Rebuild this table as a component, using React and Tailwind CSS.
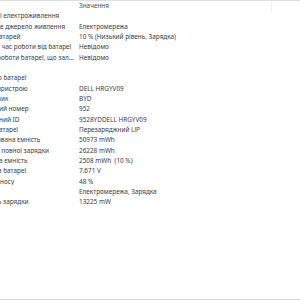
const rows = [
  { label: 'і електроживлення', shift: 'ml-0', value: '' },
  { label: 'е джерело живлення', shift: 'ml-0', value: 'Електромережа' },
  { label: 'атарей', shift: 'ml-[-1px]', value: '10 % (Низький рівень, Зарядка)' },
  { label: 'й час роботи від батареї', shift: 'ml-[-4px]', value: 'Невідомо' },
  { label: 'роботи батареї, що залишився', shift: 'ml-[-3px]', value: 'Невідомо' },
  { label: '', shift: 'ml-0', value: '' },
  { label: 'о батареї', shift: 'ml-[-2px]', value: '' },
  { label: 'пристрою', shift: 'ml-[-3px]', value: 'DELL HRGYV09' },
  { label: 'ник', shift: 'ml-[-3px]', value: 'BYD' },
  { label: 'ий номер', shift: 'ml-[-1px]', value: '952' },
  { label: 'ний ID', shift: 'ml-[-1px]', value: '9528YDDELL HRGYV09' },
  { label: 'атареї', shift: 'ml-[-1px]', value: 'Перезаряджний LiP' },
  { label: 'ована ємність', shift: 'ml-[-3px]', value: '50973 mWh' },
  { label: 'і повної зарядки', shift: 'ml-[-2px]', value: '26228 mWh' },
  { label: 'а ємність', shift: 'ml-[-1px]', value: '2508 mWh  (10 %)' },
  { label: 'а батареї', shift: 'ml-[-2px]', value: '7.671 V' },
  { label: 'зносу', shift: 'ml-[-3px]', value: '48 %' },
  { label: '', shift: 'ml-0', value: 'Електромережа, Зарядка' },
  { label: 'ть зарядки', shift: 'ml-[-5px]', value: '13225 mW' },
];

const App = () => {
  return (
    <div className="w-[300px] h-[300px] bg-white overflow-hidden flex flex-col font-['Noto_Sans',sans-serif] text-[6.4px] leading-none text-[#3a3a3a]">
      {/* Header */}
      <div className="h-[11.5px] shrink-0 border-t border-[#dedede] flex">
        <div className="w-[79px] shrink-0" />
        <div className="w-[193px] shrink-0 flex items-center border-r border-[#f0f0f0] text-[#4a4a4a]">Значення</div>
      </div>

      {/* Rows */}
      {rows.map((row, i) => (
        <div key={i} className="h-[10.33px] shrink-0 flex items-center whitespace-pre">
          <div className="w-[76px] mr-[3px] shrink-0 overflow-hidden">
            <span className={`block truncate ${row.shift}`}>{row.label}</span>
          </div>
          <div className="flex-1">{row.value}</div>
        </div>
      ))}

      <div className="flex-1 border-b border-[#d4d4d4]" />
    </div>
  );
};

export default App;
